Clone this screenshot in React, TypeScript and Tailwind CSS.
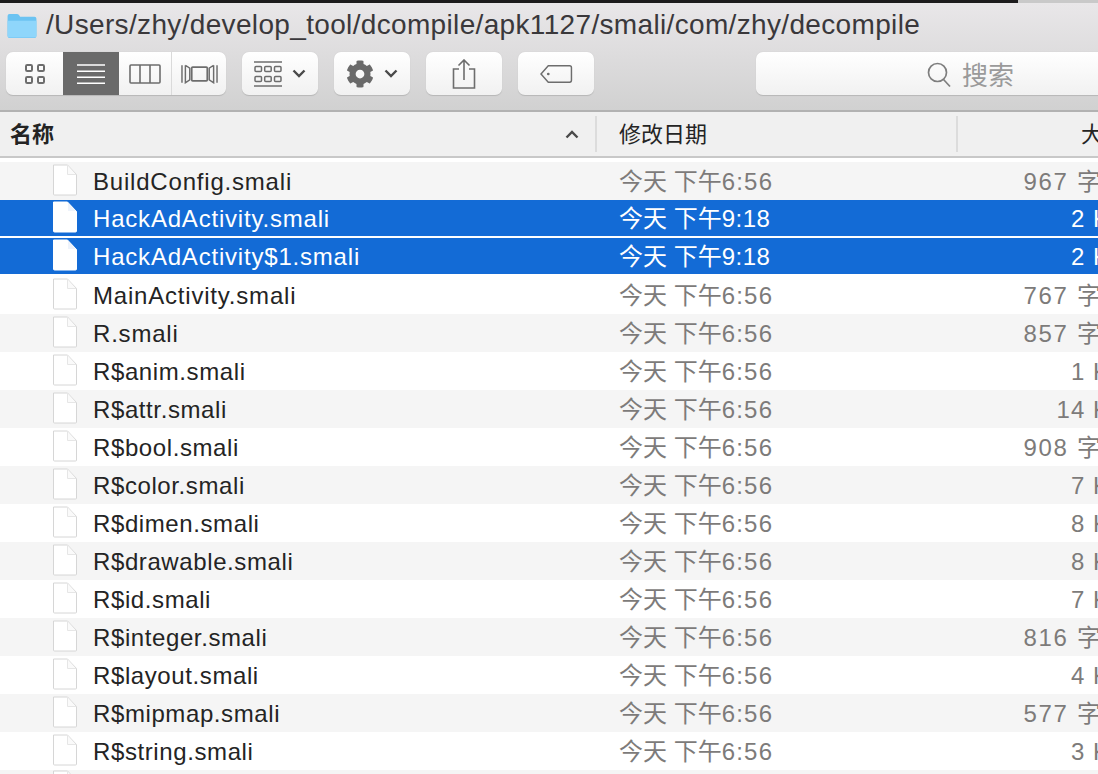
import { FaCog } from "react-icons/fa";

const FONT = "font-['Liberation_Sans','Noto_Sans_CJK_SC',sans-serif]";

const FILES = [
  { name: "BuildConfig.smali", time: "6:56", num: "967", unit: "字节" },
  { name: "HackAdActivity.smali", time: "9:18", num: "2", unit: "KB", selected: true },
  { name: "HackAdActivity$1.smali", time: "9:18", num: "2", unit: "KB", selected: true },
  { name: "MainActivity.smali", time: "6:56", num: "767", unit: "字节" },
  { name: "R.smali", time: "6:56", num: "857", unit: "字节" },
  { name: "R$anim.smali", time: "6:56", num: "1", unit: "KB" },
  { name: "R$attr.smali", time: "6:56", num: "14", unit: "KB" },
  { name: "R$bool.smali", time: "6:56", num: "908", unit: "字节" },
  { name: "R$color.smali", time: "6:56", num: "7", unit: "KB" },
  { name: "R$dimen.smali", time: "6:56", num: "8", unit: "KB" },
  { name: "R$drawable.smali", time: "6:56", num: "8", unit: "KB" },
  { name: "R$id.smali", time: "6:56", num: "7", unit: "KB" },
  { name: "R$integer.smali", time: "6:56", num: "816", unit: "字节" },
  { name: "R$layout.smali", time: "6:56", num: "4", unit: "KB" },
  { name: "R$mipmap.smali", time: "6:56", num: "577", unit: "字节" },
  { name: "R$string.smali", time: "6:56", num: "3", unit: "KB" },
];

function FileIcon({ selected }: { selected?: boolean }) {
  return (
    <svg width="26" height="34" viewBox="0 0 26 34" className="shrink-0">
      <path
        d="M1.5 1H15.5L24.500 10.500V30Q24.500 31 23.500 31H2.500Q1.500 31 1.500 30Z"
        fill="#fff"
        stroke={selected ? "#fff" : "#d6d6d6"}
      />
      {!selected && <path d="M15.500 1.500V10.500H24" fill="#fafafa" stroke="#e6e6e6" />}
      {selected && <path d="M16 2V10H23.500" fill="#eef3fb" />}
    </svg>
  );
}

function Chevron({ up, width = 14 }: { up?: boolean; width?: number }) {
  return (
    <svg width={width} height="9" viewBox="0 0 14 9">
      <path
        d={up ? "M1.5 7.5L7 2L12.5 7.5" : "M1.5 1.5L7 7L12.5 1.5"}
        fill="none"
        stroke="#4a4a4a"
        strokeWidth="2.4"
      />
    </svg>
  );
}

function ToolButton({ children, className }: { children: React.ReactNode; className: string }) {
  return (
    <div
      className={`h-11 flex items-center justify-center rounded-[7px] bg-gradient-to-b from-[#ffffff] to-[#f1f1f1] border-b border-[#b9b9b9] shadow-[0_0_1px_#bcbcbc] ${className}`}
    >
      {children}
    </div>
  );
}

function Row({ file, striped }: { file: (typeof FILES)[number]; striped: boolean }) {
  const bg = file.selected ? "bg-[#136bd6] border-b-2 border-white" : striped ? "bg-[#f5f5f5]" : "bg-white";
  const muted = file.selected ? "text-white" : "text-[#7d7b7a]";
  return (
    <div className={`h-[38px] shrink-0 flex items-center text-[24px] ${bg}`}>
      <div className={`w-[597px] shrink-0 flex items-center gap-[15px] pl-[52px] ${file.selected ? "text-white" : "text-[#242424]"}`}>
        <FileIcon selected={file.selected} />
        <span className={`pt-[2px] ${file.name.startsWith("R$") ? "tracking-[0.6px]" : "tracking-[0.8px]"}`}>{file.name}</span>
      </div>
      <div className={`w-[361px] shrink-0 pl-[22px] pt-[2px] ${muted}`}>
        今天 下午<span className={file.selected ? "tracking-[0.5px]" : "tracking-[1.2px]"}>{file.time}</span>
      </div>
      <div className={`w-[167px] shrink-0 text-right pt-[2px] ${muted}`}>
        <span className={file.unit === "KB" ? "tracking-[1px]" : "tracking-[1.7px]"}>{file.num} </span>
        {file.unit}
      </div>
    </div>
  );
}

export default function App() {
  return (
    <div className={`w-[1098px] h-[774px] overflow-hidden bg-white flex flex-col ${FONT}`}>
      {/* Window top edge */}
      <div className="h-[3px] shrink-0 flex">
        <div className="w-[1018px] bg-[#1d1c1d]" />
        <div className="flex-1 bg-[#c9c9c9]" />
      </div>

      {/* Title + toolbar */}
      <div className="h-[109px] shrink-0 bg-gradient-to-b from-[#e9e7e9] to-[#d1d1d1] border-b-2 border-[#b2b2b2] flex flex-col">
        <div className="h-[49px] shrink-0 flex items-center pl-[7px] pb-[5px] gap-[9px]">
          <svg width="30" height="25" viewBox="0 0 30 26" className="shrink-0">
            <path d="M0 3Q0 1 2 1H10Q12 1 13 4H28Q30 4 30 6V24Q30 26 28 26H2Q0 26 0 24Z" fill="#6cc3f2" />
            <path d="M0 8H30V24Q30 25.5 28 25.5H2Q0 25.5 0 24Z" fill="#8fd6fb" />
          </svg>
          <span className="text-[28px] tracking-[0.34px] text-[#3a383b] whitespace-nowrap">/Users/zhy/develop_tool/dcompile/apk1127/smali/com/zhy/decompile</span>
        </div>
        <div className="flex items-start pl-[6px]">
          {/* View switcher */}
          <div className="w-[220px] h-11 shrink-0 flex rounded-[7px] overflow-hidden bg-gradient-to-b from-[#ffffff] to-[#f1f1f1] border-b border-[#b9b9b9] shadow-[0_0_1px_#bcbcbc]">
            <div className="w-[57px] flex items-center justify-center">
              <svg width="22" height="22" viewBox="0 0 22 22" fill="none" stroke="#6d6d6d" strokeWidth="2">
                <rect x="2" y="2" width="6" height="6" rx="1.2" />
                <rect x="14" y="2" width="6" height="6" rx="1.2" />
                <rect x="2" y="14" width="6" height="6" rx="1.2" />
                <rect x="14" y="14" width="6" height="6" rx="1.2" />
              </svg>
            </div>
            <div className="w-[56px] bg-[#6a6a6a] flex items-center justify-center">
              <svg width="30" height="22" viewBox="0 0 30 22" stroke="#fff" strokeWidth="1.6">
                <path d="M1 2H29M1 8.3H29M1 14.3H29M1 20.3H29" />
              </svg>
            </div>
            <div className="w-[53px] flex items-center justify-center border-r border-[#dadada]">
              <svg width="32" height="20" viewBox="0 0 32 20" fill="none" stroke="#6d6d6d" strokeWidth="1.6">
                <rect x="1" y="1" width="30" height="18" rx="1" />
                <path d="M11 1V19M21 1V19" />
              </svg>
            </div>
            <div className="flex-1 flex items-center justify-center">
              <svg width="37" height="20" viewBox="0 0 38 20" fill="none" stroke="#6d6d6d" strokeWidth="1.5">
                <path d="M1 1V19M4.5 1V19L9 16V4L4.5 1M37 1V19M33.500 1V19L29 16V4L33.500 1" />
                <rect x="11" y="3" width="16" height="14" rx="1" strokeWidth="1.8" />
              </svg>
            </div>
          </div>

          <ToolButton className="w-[76px] ml-[16px] gap-[10px] shrink-0">
            <svg width="28" height="26" viewBox="0 0 28 26" fill="none" stroke="#6d6d6d">
              <path d="M0 1H28M0 25H28" strokeWidth="1.6" />
              <rect x="1" y="5.500" width="6.500" height="5" rx="1" strokeWidth="1.500" />
              <rect x="10.700" y="5.500" width="6.500" height="5" rx="1" strokeWidth="1.500" />
              <rect x="20.500" y="5.500" width="6.500" height="5" rx="1" strokeWidth="1.500" />
              <rect x="1" y="15.500" width="6.500" height="5" rx="1" strokeWidth="1.500" />
              <rect x="10.700" y="15.500" width="6.500" height="5" rx="1" strokeWidth="1.500" />
              <rect x="20.500" y="15.500" width="6.500" height="5" rx="1" strokeWidth="1.500" />
            </svg>
            <Chevron />
          </ToolButton>

          <ToolButton className="w-[76px] ml-[16px] gap-[10px] shrink-0">
            <FaCog className="w-[28px] h-[28px] text-[#6a6a6a]" />
            <Chevron />
          </ToolButton>

          <ToolButton className="w-[76px] ml-[16px] shrink-0">
            <svg width="24" height="30" viewBox="0 0 24 30" fill="none" stroke="#6d6d6d" strokeWidth="1.6">
              <path d="M7 10H1.500V29H22.500V10H17" />
              <path d="M12 21V1.500M6.500 6.500L12 1L17.500 6.500" />
            </svg>
          </ToolButton>

          <ToolButton className="w-[76px] ml-[16px] shrink-0">
            <svg width="34" height="20" viewBox="0 0 36 22" fill="none" stroke="#6d6d6d" strokeWidth="1.6">
              <path d="M9.500 2H33Q35 2 35 4V18Q35 20 33 20H9.500L1.500 11Z" />
              <circle cx="9.500" cy="11" r="1.500" fill="#6d6d6d" stroke="none" />
            </svg>
          </ToolButton>

          {/* Search */}
          <div className="w-[360px] h-11 ml-[162px] shrink-0 rounded-l-[7px] bg-gradient-to-b from-[#ffffff] to-[#f1f1f1] border-b border-[#b9b9b9] shadow-[0_0_1px_#bcbcbc] flex items-center pl-[171px] gap-[11px]">
            <svg width="24" height="26" viewBox="0 0 24 26" fill="none" stroke="#7e7e7e" strokeWidth="1.7" className="mt-[2px]">
              <circle cx="10.500" cy="10.500" r="9" />
              <path d="M16.500 17.500L23 24.500" />
            </svg>
            <span className="text-[26px] text-[#9a9a9a] pt-[5px]">搜索</span>
          </div>
        </div>
      </div>

      {/* Column headers */}
      <div className="h-[46px] shrink-0 bg-[#f0f0f0] border-b-2 border-[#c8c8c8] flex items-center text-[22px] text-[#242424]">
        <div className="w-[597px] h-9 shrink-0 flex items-center justify-between pl-[10px] pr-[15px] border-r-2 border-[#dcdcdc] font-bold">
          <span>名称</span>
          <Chevron up width={16} />
        </div>
        <div className="w-[361px] h-9 shrink-0 flex items-center pl-[22px] border-r-2 border-[#dcdcdc]">修改日期</div>
        <div className="w-[167px] shrink-0 text-right">大小</div>
      </div>

      {/* File list */}
      <div className="h-1 shrink-0 bg-white" />
      <div className="flex-1 flex flex-col">
        {FILES.map((file, i) => (
          <Row key={file.name} file={file} striped={i % 2 === 0} />
        ))}
        <div className="h-[38px] shrink-0 bg-[#f5f5f5] pl-[52px]">
          <FileIcon />
        </div>
      </div>
    </div>
  );
}
